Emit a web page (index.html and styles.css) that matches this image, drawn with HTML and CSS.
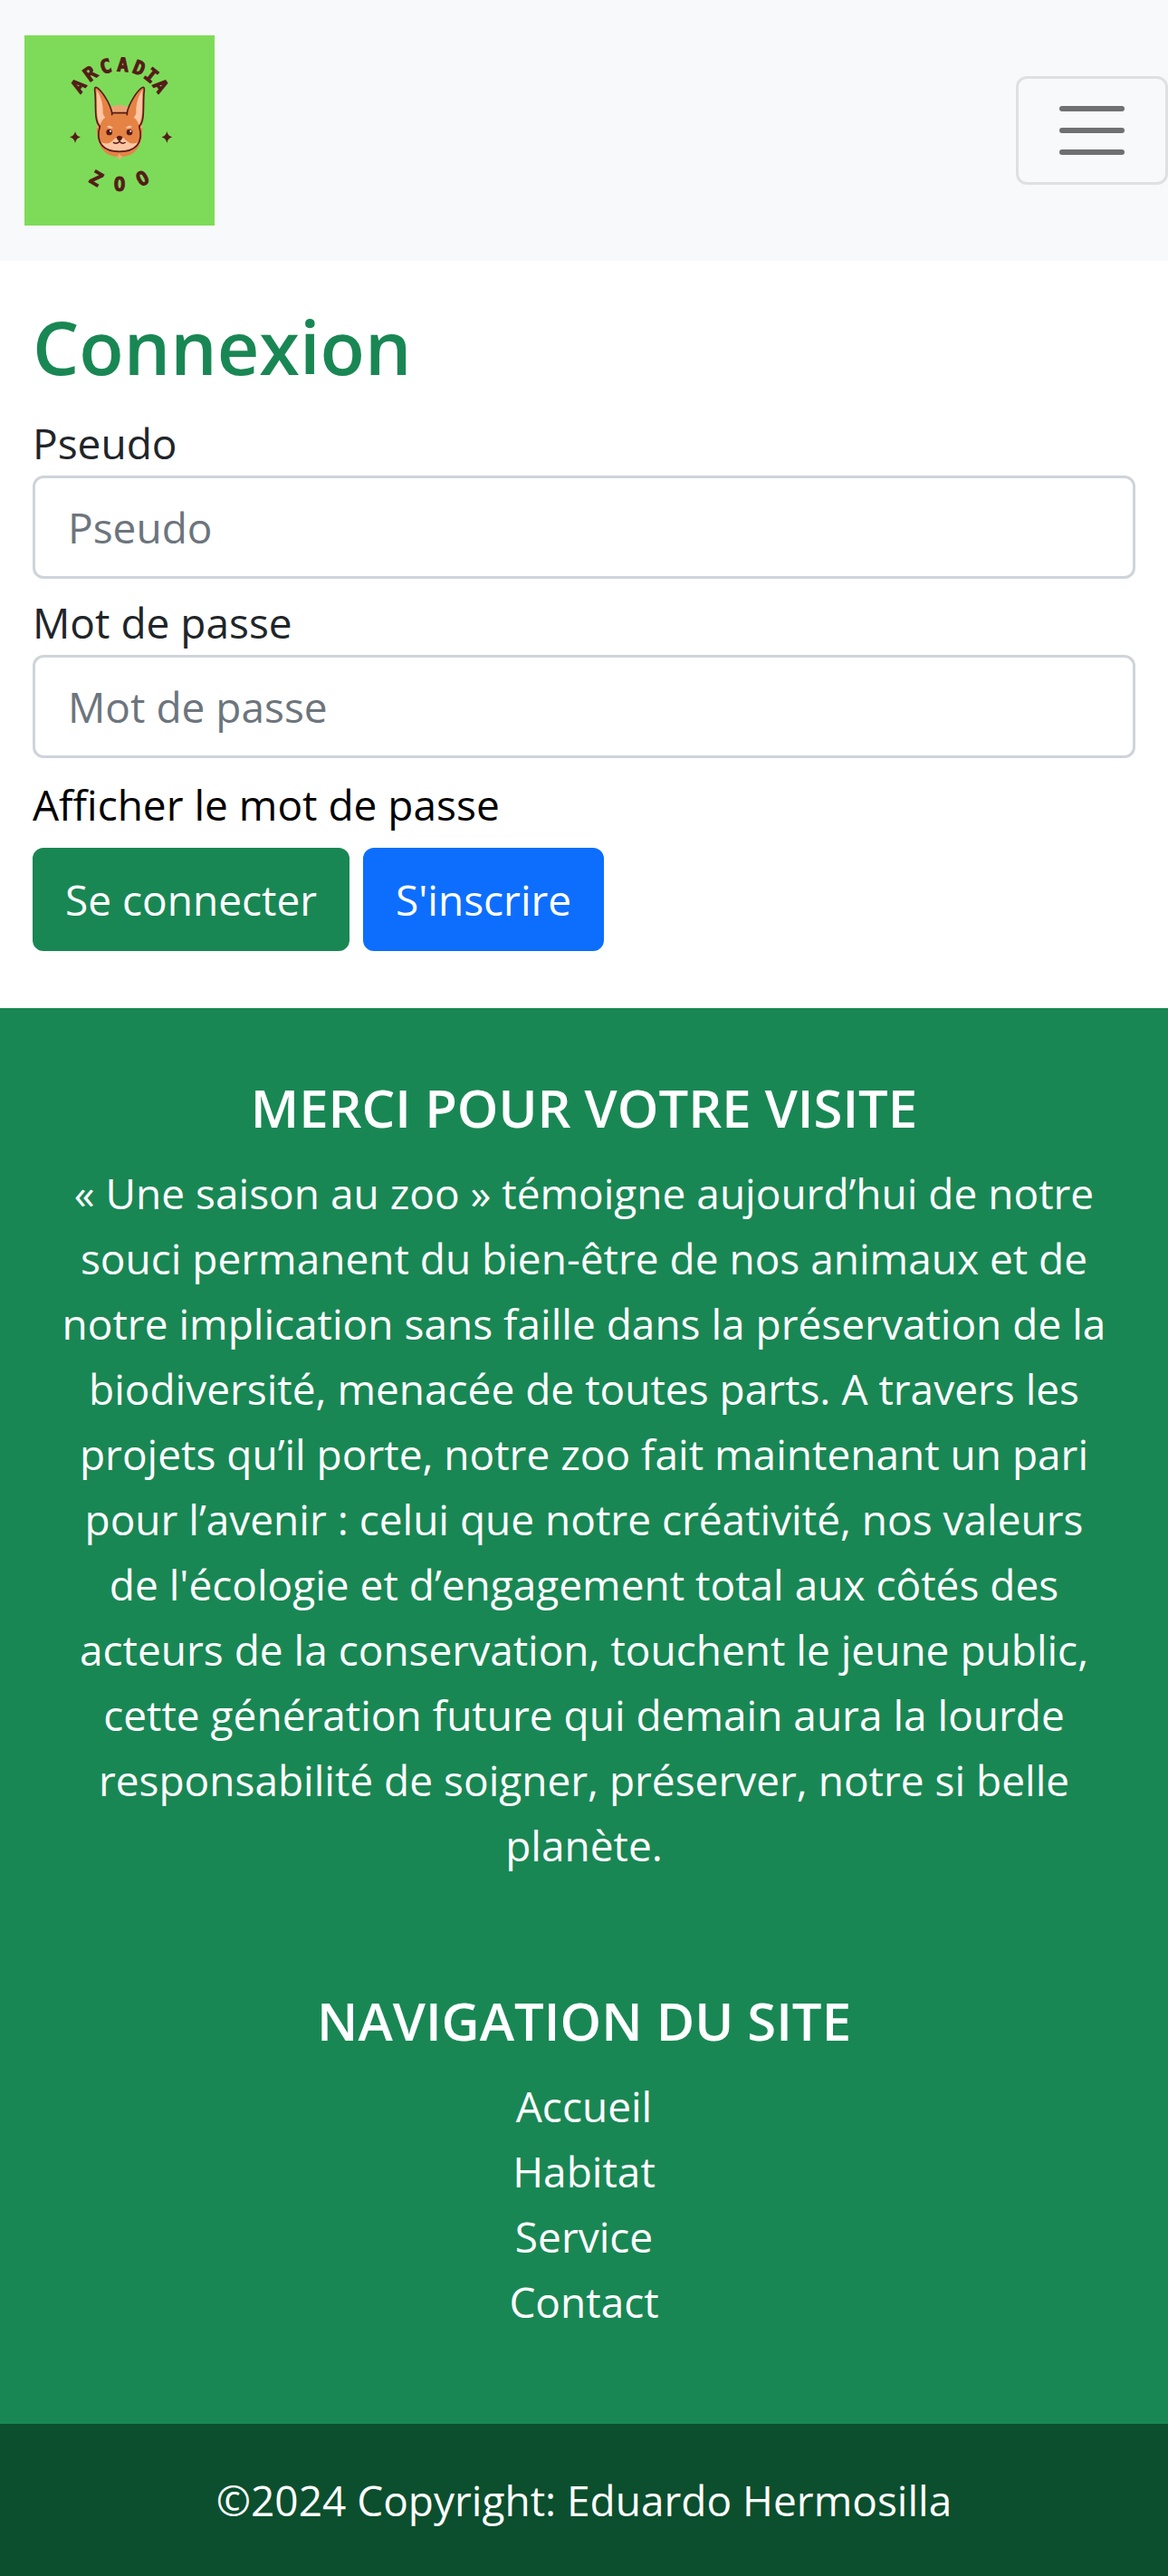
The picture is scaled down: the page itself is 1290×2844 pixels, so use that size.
FILE: index.html
```html
<!DOCTYPE html>
<html lang="fr">
<head>
  <meta charset="utf-8">
  <meta name="viewport" content="width=device-width, initial-scale=1">
  <title>Connexion - Arcadia Zoo</title>
  <link rel="stylesheet" href="styles.css">
</head>
<body>
  <header class="navbar">
    <a class="brand" href="#" aria-label="Arcadia Zoo">
      <svg class="logo" viewBox="0 0 210 210" aria-hidden="true">
        <rect width="210" height="210" fill="#7edb59"/>
        <text class="logo-text" x="61.7 71.9 85.6 102 118 130.6 140.8" y="65.3 52 43 39.4 40.4 46 55.1" rotate="-53 -37 -15 3 22 39 54">ARCADIA</text>
        <text class="logo-text" x="69.9 98.7 128.3" y="161.2 172 167.5" rotate="30 0 -28">ZOO</text>
        <g transform="scale(.33333) translate(-81 -117)">
          <circle cx="396" cy="424" r="76" fill="#eda273"/>
          <path d="M320 424 Q322 520 396 520 Q472 520 472 424Z" fill="#e58345"/>
          <path d="M372 374 H420 C427 342 455 300 471 290 Q479 286 478 300 C472 340 482 400 463 418 C475 476 446 502 396 502 C346 502 317 476 329 418 C310 400 320 340 314 300 Q313 286 321 290 C337 300 365 342 372 374Z" fill="#e58345"/>
          <path d="M320 298 C336 320 342 350 341 375 Q344 385 349 389 Q338 395 332 413 C316 390 323 340 320 298Z" fill="#ffc6a3"/>
          <path d="M472 298 C456 320 450 350 451 375 Q448 385 443 389 Q454 395 460 413 C476 390 469 340 472 298Z" fill="#ffc6a3"/>
          <path d="M329 467 Q352 483 370 469 Q382 454 396 453 Q410 454 422 469 Q440 483 463 467 Q451 500 396 500 Q341 500 329 467Z" fill="#ffc6a3"/>
          <g fill="none" stroke="#541c18" stroke-width="5" stroke-linecap="round" stroke-linejoin="round">
            <path d="M371 380 V374 H421 V380 M371 374 C365 342 337 300 321 290 Q313 286 314 300 C320 340 310 400 330 418 M421 374 C427 342 455 300 471 290 Q479 286 478 300 C472 340 482 400 462 418"/>
            <path d="M331 418 C314 476 346 502 396 502 C446 502 478 476 461 418"/>
            <path d="M396 460 V469 Q386 479 376 472 M396 469 Q406 479 415 472" stroke-width="4"/>
          </g>
          <path d="M396 505 Q398 518 408 519 Q398 521 396 533 Q394 521 384 519 Q394 518 396 505Z" fill="#f0a878"/>
          <g fill="#541c18">
            <circle cx="362" cy="438" r="10"/><circle cx="429" cy="438" r="10"/>
            <path d="M386 454 Q396 444 406 454 Q405 464 396 467 Q387 464 386 454Z"/>
            <path d="M249 435 Q252 451 267 454 Q252 458 249 474 Q246 458 231 454 Q246 451 249 435Z"/>
            <path d="M553 435 Q556 451 571 454 Q556 458 553 474 Q550 458 535 454 Q550 451 553 435Z"/>
          </g>
          <g fill="#fff"><circle cx="366" cy="434" r="3"/><circle cx="433" cy="434" r="3"/></g>
          <path d="M354 420 Q364 411 375 424 Q364 427 354 420Z M438 420 Q428 411 416 424 Q428 427 438 420Z" fill="#ffc6a3"/>
        </g>
      </svg>
    </a>
    <button class="toggler" type="button" aria-label="Ouvrir le menu">
      <svg class="toggler-icon" viewBox="0 0 90 90" aria-hidden="true">
        <path d="M12 21H78M12 45H78M12 69H78" stroke="#6f7071" stroke-width="6" stroke-linecap="round"/>
      </svg>
    </button>
  </header>

  <main class="login">
    <h1 class="login-title">Connexion</h1>
    <form class="login-form">
      <div class="field">
        <label for="pseudo">Pseudo</label>
        <input class="control" id="pseudo" type="text" placeholder="Pseudo">
      </div>
      <div class="field">
        <label for="password">Mot de passe</label>
        <input class="control" id="password" type="password" placeholder="Mot de passe">
      </div>
      <button class="show-password" type="button">Afficher le mot de passe</button>
      <div class="actions">
        <button class="btn btn-success" type="submit">Se connecter</button>
        <a class="btn btn-primary" href="#">S'inscrire</a>
      </div>
    </form>
  </main>

  <footer class="footer">
    <div class="footer-body">
      <section>
        <h2 class="footer-title">MERCI POUR VOTRE VISITE</h2>
        <p class="footer-text">« Une saison au zoo » témoigne aujourd’hui de notre souci permanent du bien-être de nos animaux et de notre implication sans faille dans la préservation de la biodiversité, menacée de toutes parts. A travers les projets qu’il porte, notre zoo fait maintenant un pari pour l’avenir : celui que notre créativité, nos valeurs de l'écologie et d’engagement total aux côtés des acteurs de la conservation, touchent le jeune public, cette génération future qui demain aura la lourde responsabilité de soigner, préserver, notre si belle planète.</p>
      </section>
      <nav>
        <h2 class="footer-title">NAVIGATION DU SITE</h2>
        <ul class="footer-links">
          <li><a href="#">Accueil</a></li>
          <li><a href="#">Habitat</a></li>
          <li><a href="#">Service</a></li>
          <li><a href="#">Contact</a></li>
        </ul>
      </nav>
    </div>
    <div class="copyright">©2024 Copyright: <a href="#">Eduardo Hermosilla</a></div>
  </footer>
</body>
</html>
```
FILE: styles.css
```css
*,
*::before,
*::after {
  box-sizing: border-box;
}

body {
  margin: 0;
  background: #fff;
  color: #212529;
  font-family: "Segoe UI", "Open Sans", "Noto Sans", sans-serif;
  font-size: 46px;
  line-height: 72px;
}

h1,
h2,
p,
ul {
  margin: 0;
  padding: 0;
}

a {
  color: inherit;
  text-decoration: none;
}

button,
input {
  font: inherit;
}

.navbar {
  display: flex;
  align-items: center;
  justify-content: space-between;
  padding: 39px 0 39px 27px;
  background: #f8f9fa;
}

.brand,
.logo {
  display: block;
}

.logo {
  width: 210px;
  height: 210px;
}

.logo-text {
  fill: #541c18;
  stroke: #541c18;
  stroke-width: 1px;
  font-family: "DejaVu Sans Mono", monospace;
  font-size: 21px;
  font-weight: 700;
}

.toggler {
  display: flex;
  align-items: center;
  justify-content: center;
  padding: 12px 36px;
  border: 3px solid #dfe0e1;
  border-radius: 12px;
  background: transparent;
}

.toggler-icon {
  display: block;
  width: 90px;
  height: 90px;
}

.login {
  padding: 44px 36px 63px;
}

.login-title {
  margin-bottom: 20px;
  color: #198754;
  font-size: 81px;
  font-weight: 600;
  line-height: 101px;
}

.login-form {
  display: flex;
  flex-direction: column;
  gap: 12px;
}

.field {
  display: flex;
  flex-direction: column;
}

.control {
  width: 100%;
  height: 114px;
  padding: 18px 36px;
  border: 3px solid #ced4da;
  border-radius: 12px;
  background: #fff;
  color: #212529;
}

.control::placeholder {
  color: #6c757d;
  opacity: 1;
}

.show-password {
  align-self: flex-start;
  padding: 3px 0 0;
  border: 0;
  background: transparent;
  color: #000;
}

.actions {
  display: flex;
  gap: 15px;
}

.btn {
  padding: 18px 33px;
  border: 3px solid transparent;
  border-radius: 12px;
  color: #fff;
}

.btn-success {
  border-color: #198754;
  background: #198754;
}

.btn-primary {
  border-color: #0d6efd;
  background: #0d6efd;
}

.footer {
  background: #198754;
  color: #fff;
  text-align: center;
}

.footer-body {
  display: flex;
  flex-direction: column;
  gap: 120px;
  padding: 72px 66px 99px;
}

.footer-title {
  margin-bottom: 20px;
  font-size: 58px;
  font-weight: 600;
  line-height: 76px;
}

.footer-links {
  list-style: none;
}

.copyright {
  padding: 48px;
  background: #0b4f2e;
}
```
